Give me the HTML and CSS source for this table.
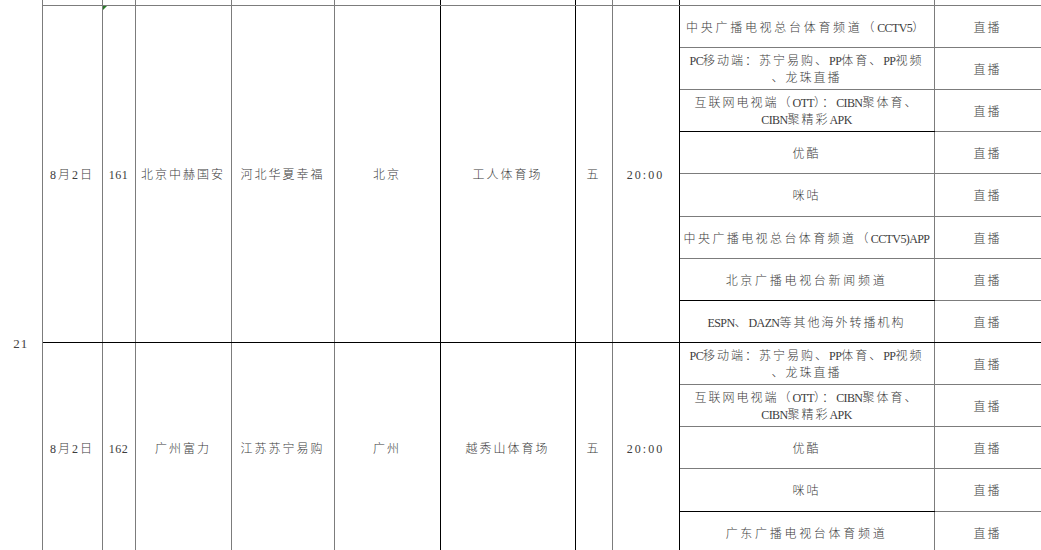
FILE: index.html
```html
<!DOCTYPE html>
<html lang="zh-CN">
<head>
<meta charset="utf-8">
<title>赛程转播表</title>
<link rel="stylesheet" href="styles.css">
</head>
<body>
<table class="sheet">
  <colgroup>
    <col class="c-round"><col class="c-date"><col class="c-no"><col class="c-home"><col class="c-away"><col class="c-city"><col class="c-venue"><col class="c-day"><col class="c-time"><col class="c-media"><col class="c-type">
  </colgroup>
  <tr class="stub">
    <td class="round" rowspan="14">21</td>
    <td></td><td></td><td></td><td></td><td class="bk"></td><td class="bk"></td><td></td><td class="bk"></td><td></td><td></td>
  </tr>

  <tr class="r">
    <td rowspan="8" class="bb">8月2日</td>
    <td rowspan="8" class="bb no flag">161</td>
    <td rowspan="8" class="bb">北京中赫国安</td>
    <td rowspan="8" class="bb">河北华夏幸福</td>
    <td rowspan="8" class="bb bk">北京</td>
    <td rowspan="8" class="bb bk">工人体育场</td>
    <td rowspan="8" class="bb">五</td>
    <td rowspan="8" class="bb bk">20:00</td>
    <td class="media wide">中央广播电视总台体育频道（<span class="en">CCTV5</span>）</td>
    <td>直播</td>
  </tr>
  <tr class="r">
    <td class="media"><span class="en">PC</span>移动端：苏宁易购、<span class="en">PP</span>体育、<span class="en">PP</span>视频<br>、龙珠直播</td>
    <td>直播</td>
  </tr>
  <tr class="r">
    <td class="media bb">互联网电视端（<span class="en">OTT</span>）：<span class="en">CIBN</span>聚体育、<br><span class="en">CIBN</span>聚精彩<span class="en">APK</span></td>
    <td>直播</td>
  </tr>
  <tr class="r">
    <td class="media">优酷</td>
    <td>直播</td>
  </tr>
  <tr class="r43">
    <td class="media">咪咕</td>
    <td>直播</td>
  </tr>
  <tr class="r">
    <td class="media mid">中央广播电视总台体育频道（<span class="en">CCTV5)APP</span></td>
    <td>直播</td>
  </tr>
  <tr class="r">
    <td class="media wide bb">北京广播电视台新闻频道</td>
    <td>直播</td>
  </tr>
  <tr class="r">
    <td class="media bb"><span class="en">ESPN</span>、<span class="en">DAZN</span>等其他海外转播机构</td>
    <td class="bb">直播</td>
  </tr>

  <tr class="r">
    <td rowspan="5">8月2日</td>
    <td rowspan="5" class="no">162</td>
    <td rowspan="5">广州富力</td>
    <td rowspan="5">江苏苏宁易购</td>
    <td rowspan="5" class="bk">广州</td>
    <td rowspan="5" class="bk">越秀山体育场</td>
    <td rowspan="5">五</td>
    <td rowspan="5" class="bk">20:00</td>
    <td class="media"><span class="en">PC</span>移动端：苏宁易购、<span class="en">PP</span>体育、<span class="en">PP</span>视频<br>、龙珠直播</td>
    <td>直播</td>
  </tr>
  <tr class="r">
    <td class="media">互联网电视端（<span class="en">OTT</span>）：<span class="en">CIBN</span>聚体育、<br><span class="en">CIBN</span>聚精彩<span class="en">APK</span></td>
    <td>直播</td>
  </tr>
  <tr class="r">
    <td class="media">优酷</td>
    <td>直播</td>
  </tr>
  <tr class="r43">
    <td class="media bb">咪咕</td>
    <td>直播</td>
  </tr>
  <tr class="r">
    <td class="media wide">广东广播电视台体育频道</td>
    <td>直播</td>
  </tr>
</table>
</body>
</html>
```

FILE: styles.css
```css
html, body {
  margin: 0;
  padding: 0;
  background: #ffffff;
  overflow: hidden;
}

body {
  font-family: "Liberation Serif", "Noto Sans CJK SC", serif;
  font-size: 12px;
  font-weight: 300;
  color: #3c3c3c;
}

.sheet {
  border-collapse: collapse;
  table-layout: fixed;
  width: 1041px;
}

.c-round { width: 42px; }
.c-date  { width: 60px; }
.c-no    { width: 33px; }
.c-home  { width: 96px; }
.c-away  { width: 103px; }
.c-city  { width: 106px; }
.c-venue { width: 135px; }
.c-day   { width: 37px; }
.c-time  { width: 67px; }
.c-media { width: 255px; }
.c-type  { width: 107px; }

.sheet td {
  border: 0;
  border-right: 1px solid #7c7c7c;
  border-bottom: 1px solid #7c7c7c;
  padding: 3px 2px 0;
  text-align: center;
  vertical-align: middle;
  letter-spacing: 2px;
  line-height: 17px;
  white-space: nowrap;
  overflow: hidden;
}

.sheet .stub td {
  height: 5px;
  padding: 0;
  line-height: 0;
  font-size: 0;
}

.sheet td.round {
  border-bottom: 0;
  vertical-align: top;
  padding-top: 344px;
  font-size: 13px;
  letter-spacing: 1px;
  color: #444;
}

.r { height: 42px; }
.r43 { height: 43px; }

.sheet td.bk { border-right-color: #000; }
.sheet td.bb { border-bottom-color: #000; }

.sheet td.no { letter-spacing: 0.5px; }

.flag { position: relative; }
.flag::before {
  content: "";
  position: absolute;
  top: 0;
  left: 0;
  width: 0;
  height: 0;
  border-top: 4px solid #2a7a2a;
  border-right: 4px solid transparent;
}

.media.wide { letter-spacing: 2.7px; }
.media.mid { letter-spacing: 2.4px; }

.en {
  letter-spacing: -0.6px;
}
```
